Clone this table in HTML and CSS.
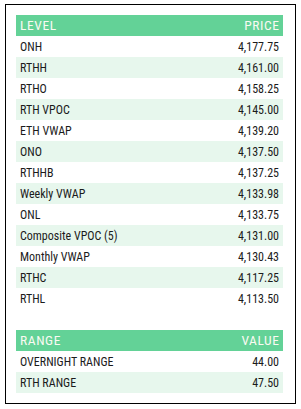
FILE: index.html
```html
<!DOCTYPE html>
<html>
<head>
<meta charset="utf-8">
<link rel="stylesheet" href="styles.css">
</head>
<body>
<div class="panel">
  <table class="grid">
    <thead><tr><th class="l">LEVEL</th><th class="r">PRICE</th></tr></thead>
    <tbody>
      <tr><td>ONH</td><td class="r">4,177.75</td></tr>
      <tr><td>RTHH</td><td class="r">4,161.00</td></tr>
      <tr><td>RTHO</td><td class="r">4,158.25</td></tr>
      <tr><td>RTH VPOC</td><td class="r">4,145.00</td></tr>
      <tr><td>ETH VWAP</td><td class="r">4,139.20</td></tr>
      <tr><td>ONO</td><td class="r">4,137.50</td></tr>
      <tr><td>RTHHB</td><td class="r">4,137.25</td></tr>
      <tr><td>Weekly VWAP</td><td class="r">4,133.98</td></tr>
      <tr><td>ONL</td><td class="r">4,133.75</td></tr>
      <tr><td>Composite VPOC (5)</td><td class="r">4,131.00</td></tr>
      <tr><td>Monthly VWAP</td><td class="r">4,130.43</td></tr>
      <tr><td>RTHC</td><td class="r">4,117.25</td></tr>
      <tr><td>RTHL</td><td class="r">4,113.50</td></tr>
    </tbody>
  </table>
  <table class="grid second">
    <thead><tr><th class="l">RANGE</th><th class="r">VALUE</th></tr></thead>
    <tbody>
      <tr><td>OVERNIGHT RANGE</td><td class="r">44.00</td></tr>
      <tr><td>RTH RANGE</td><td class="r">47.50</td></tr>
    </tbody>
  </table>
</div>
</body>
</html>
```
FILE: styles.css
```css
html, body { margin: 0; padding: 0; background: #fff; }
body { padding: 4px 5px 5px 5px; }
.panel {
  width: 291px;
  height: 400px;
  box-sizing: border-box;
  border: 1px solid #000;
  padding: 10px 12px 0 10px;
  font-family: "Roboto Condensed", "Liberation Sans", sans-serif;
  font-size: 12px;
  color: #1b1b1b;
}
.grid {
  width: 100%;
  border-collapse: collapse;
  border-spacing: 0;
}
.grid th, .grid td {
  height: 21px;
  padding: 0 4px;
  font-weight: normal;
  white-space: nowrap;
  box-sizing: border-box;
}
.grid td {
  padding-top: 2px;
  line-height: 19px;
}
.grid th {
  background: #63d297;
  color: #fafaf2;
  font-size: 13.5px;
  font-weight: normal;
  letter-spacing: 0.6px;
  line-height: 21px;
}
.grid th.r { padding-right: 3.4px; }
.grid tbody tr:nth-child(even) td { background: #e7f7ed; }
.l { text-align: left; }
.r { text-align: right; }
.second { margin-top: 21px; }
```
